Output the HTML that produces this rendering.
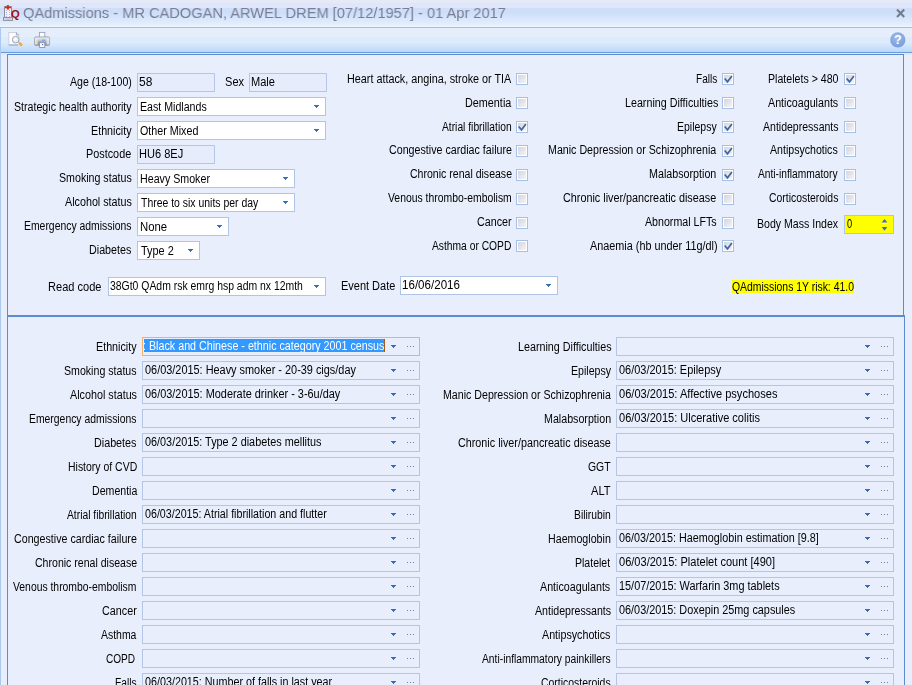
<!DOCTYPE html>
<html><head><meta charset="utf-8"><title>QAdmissions</title>
<style>
*{box-sizing:border-box;margin:0;padding:0}
html,body{width:912px;height:685px;overflow:hidden;background:#e8eefc}
body{position:relative;font-family:"Liberation Sans",sans-serif;font-size:12.5px;color:#000}
.abs{position:absolute}
#title{position:absolute;left:0;top:0;width:912px;height:28px;background:linear-gradient(#e6eaf6 0,#e6eaf6 3px,#dde6fb 3px,#dde6fb 8px,#cfdef6 8px,#cfdef6 13px,#cbe0fb 13px,#e6eefc 25px,#eaf5ff 26px,#eaf5ff 27px,#9dc0ea 27px,#9dc0ea 28px)}
#tool{position:absolute;left:0;top:28px;width:912px;height:27px;background:linear-gradient(#e6eefc 0,#e6eefc 9px,#dcecfd 9px,#dcecfd 15px,#dde9fb 15px,#b9d8fb 24px,#6a9bdc 24px,#6a9bdc 25px,#dfe9fa 25px,#dfe9fa 27px)}
#txt{position:absolute;left:0;top:0;width:912px;height:685px;will-change:transform}
#lstrip{position:absolute;left:0;top:28px;width:1px;height:657px;background:#a9c9f0}
.t{position:absolute;white-space:nowrap;height:24px;line-height:24px;transform-origin:0 50%}
.tt{font-size:15px;color:#787d93;will-change:transform}
.ro,.sel,.cmb{position:absolute;height:19px;border:1px solid #b0c4e6}
.ro{background:#e6ecfb;border-color:#b4c6e7}
.sel{background:#fff}
.sel i,.cmb i{position:absolute;top:7px;width:5px;height:3px;background:linear-gradient(#3c6cb4,#3c6cb4) 0 0/5px 1px no-repeat,linear-gradient(#3c6cb4,#3c6cb4) 1px 1px/3px 1px no-repeat,linear-gradient(#3c6cb4,#3c6cb4) 2px 2px/1px 1px no-repeat}
.sel i{right:6px}
.cb{position:absolute;width:12px;height:12px;border:1px solid #a5c0e4;background:#fff;padding:1px}
.cb:before{content:"";display:block;width:8px;height:8px;background:linear-gradient(135deg,#d3d6de,#f4f4f7)}
.cb svg{position:absolute;left:1px;top:1px}
.cmb{background:#e8eefc;border-color:#b4c6e6}
.cmb i{right:23px}
.cmb b{position:absolute;right:5px;top:8px;width:7px;height:1px;background:linear-gradient(90deg,#6482b4 0,#6482b4 1px,transparent 1px,transparent 3px,#6482b4 3px,#6482b4 4px,transparent 4px,transparent 6px,#6482b4 6px,#6482b4 7px)}
</style></head><body>
<div id="title"></div>
<div id="tool"></div>
<svg class="abs" style="left:0;top:0" width="60" height="55" viewBox="0 0 60 55">
<defs>
<linearGradient id="pb" x1="0" y1="0" x2="0" y2="1"><stop offset="0" stop-color="#ececf2"/><stop offset="0.35" stop-color="#d4d2da"/><stop offset="0.55" stop-color="#aeaab4"/><stop offset="1" stop-color="#85858f"/></linearGradient>
<radialGradient id="lens" cx="0.4" cy="0.35" r="0.7"><stop offset="0" stop-color="#ffffff"/><stop offset="1" stop-color="#dbe6f6"/></radialGradient>
</defs>
<!-- app icon -->
<rect x="4.5" y="6.6" width="7" height="11" fill="#f4f3fa" stroke="#8f8f96" stroke-width="1"/>
<rect x="3.5" y="17.6" width="9" height="2.8" fill="#e4e2f2" stroke="#8f8f96" stroke-width="1"/>
<g fill="#aaa8e6"><rect x="5.9" y="10" width="1" height="1"/><rect x="9.1" y="10" width="1" height="1"/><rect x="5.9" y="12" width="1" height="1"/><rect x="9.1" y="12" width="1" height="1"/><rect x="5.9" y="14" width="1" height="1"/><rect x="9.1" y="14" width="1" height="1"/><rect x="5.9" y="16" width="1" height="1"/><rect x="9.1" y="16" width="1" height="1"/><rect x="5.5" y="18.6" width="5" height="1" opacity=".7"/></g>
<rect x="6.9" y="5.1" width="2" height="4.5" fill="#d8281c"/><rect x="4.9" y="6.6" width="6" height="1.7" fill="#d8281c"/>
<text x="10.9" y="18.3" font-family="Liberation Sans, sans-serif" font-weight="bold" font-size="11.2" fill="#9c0e14">Q</text>
<!-- preview icon -->
<path d="M8.8 32.5 H16.4 L18.8 34.9 V45 H8.8 Z" fill="#fdfdff" stroke="#c3c9d6" stroke-width="0.8"/>
<path d="M8.8 45 H18" stroke="#8fa0bd" stroke-width="1"/>
<path d="M16.4 32.5 V34.9 H18.8" fill="none" stroke="#8f9bb5" stroke-width="0.9"/>
<circle cx="15.7" cy="39.7" r="3.3" fill="url(#lens)" stroke="#a2a4ae" stroke-width="1"/>
<path d="M18.4 43 L20.2 41.9 L22.9 44.8 L20.9 46.6 Z" fill="#f2a636"/>
<!-- printer -->
<rect x="39.4" y="32.4" width="5.4" height="5" fill="#fdfdff" stroke="#9aa2b8" stroke-width="0.9"/>
<rect x="34.6" y="36.9" width="15" height="8.6" rx="1.3" fill="url(#pb)" stroke="#9a9aa6" stroke-width="0.8"/>
<rect x="35" y="38" width="2.6" height="6.6" fill="#e9e9f0" opacity=".85"/><rect x="46.6" y="38" width="2.6" height="6.6" fill="#e9e9f0" opacity=".85"/>
<rect x="41.9" y="39.6" width="3.2" height="1.2" fill="#5faaf2"/>
<rect x="39.6" y="42.7" width="5.2" height="4.8" fill="#fdfdff" stroke="#8d93a6" stroke-width="0.9"/>
<rect x="42" y="44" width="1.2" height="1.2" fill="#4a6fe0"/>
</svg>
<svg class="abs" style="left:885px;top:0" width="27" height="55" viewBox="885 0 27 55">
<defs><radialGradient id="hg" cx="0.45" cy="0.35" r="0.75"><stop offset="0" stop-color="#9fbcea"/><stop offset="1" stop-color="#7399d8"/></radialGradient></defs>
<path d="M897 9.6 L904.2 17 M904.2 9.6 L897 17" stroke="#737b8f" stroke-width="2.1" fill="none"/>
<circle cx="897.8" cy="39.9" r="7.6" fill="url(#hg)"/>
<text x="897.8" y="44.4" text-anchor="middle" font-family="Liberation Sans, sans-serif" font-weight="bold" font-size="12.5" fill="#fff">?</text>
</svg>
<div id="lstrip"></div>

<div class="t tt" style="left:23.30px;top:1.00px;transform:scaleX(0.9752)">QAdmissions - MR CADOGAN, ARWEL DREM [07/12/1957] - 01 Apr 2017</div>
<div class="abs" style="left:7px;top:54px;width:897px;height:263px;border:1px solid #5b8bd0;border-bottom-width:2px"></div>
<div class="abs" style="left:7px;top:315px;width:898px;height:380px;border:1px solid #5b8bd0;border-top-width:2px"></div>
<div class="ro" style="left:137px;width:78px;top:73px;"></div>
<div class="ro" style="left:249px;width:78px;top:73px;"></div>
<div class="sel" style="left:137px;width:189px;top:97px;"><i></i></div>
<div class="sel" style="left:137px;width:189px;top:121px;"><i></i></div>
<div class="ro" style="left:137px;width:78px;top:145px;"></div>
<div class="sel" style="left:137px;width:158px;top:169px;"><i></i></div>
<div class="sel" style="left:137px;width:158px;top:193px;"><i></i></div>
<div class="sel" style="left:137px;width:92px;top:217px;"><i></i></div>
<div class="sel" style="left:137px;width:63px;top:241px;"><i></i></div>
<div class="sel" style="left:108px;width:218px;top:277px;"><i></i></div>
<div class="sel" style="left:400px;width:158px;top:276px;"><i></i></div>
<div class="cb" style="left:516px;top:73px"></div>
<div class="cb" style="left:516px;top:97px"></div>
<div class="cb" style="left:516px;top:121px"><svg width="10" height="10" viewBox="0 0 10 10"><path d="M0.7 3.5 L3.5 6.8 L7.9 1" stroke="#3f66a6" stroke-width="1.7" fill="none"/></svg></div>
<div class="cb" style="left:516px;top:145px"></div>
<div class="cb" style="left:516px;top:169px"></div>
<div class="cb" style="left:516px;top:193px"></div>
<div class="cb" style="left:516px;top:217px"></div>
<div class="cb" style="left:516px;top:240px"></div>
<div class="cb" style="left:722px;top:73px"><svg width="10" height="10" viewBox="0 0 10 10"><path d="M0.7 3.5 L3.5 6.8 L7.9 1" stroke="#3f66a6" stroke-width="1.7" fill="none"/></svg></div>
<div class="cb" style="left:722px;top:97px"></div>
<div class="cb" style="left:722px;top:121px"><svg width="10" height="10" viewBox="0 0 10 10"><path d="M0.7 3.5 L3.5 6.8 L7.9 1" stroke="#3f66a6" stroke-width="1.7" fill="none"/></svg></div>
<div class="cb" style="left:722px;top:145px"><svg width="10" height="10" viewBox="0 0 10 10"><path d="M0.7 3.5 L3.5 6.8 L7.9 1" stroke="#3f66a6" stroke-width="1.7" fill="none"/></svg></div>
<div class="cb" style="left:722px;top:169px"><svg width="10" height="10" viewBox="0 0 10 10"><path d="M0.7 3.5 L3.5 6.8 L7.9 1" stroke="#3f66a6" stroke-width="1.7" fill="none"/></svg></div>
<div class="cb" style="left:722px;top:193px"></div>
<div class="cb" style="left:722px;top:217px"></div>
<div class="cb" style="left:722px;top:240px"><svg width="10" height="10" viewBox="0 0 10 10"><path d="M0.7 3.5 L3.5 6.8 L7.9 1" stroke="#3f66a6" stroke-width="1.7" fill="none"/></svg></div>
<div class="cb" style="left:844px;top:73px"><svg width="10" height="10" viewBox="0 0 10 10"><path d="M0.7 3.5 L3.5 6.8 L7.9 1" stroke="#3f66a6" stroke-width="1.7" fill="none"/></svg></div>
<div class="cb" style="left:844px;top:97px"></div>
<div class="cb" style="left:844px;top:121px"></div>
<div class="cb" style="left:844px;top:145px"></div>
<div class="cb" style="left:844px;top:169px"></div>
<div class="cb" style="left:844px;top:193px"></div>
<div class="abs" style="left:844px;top:215px;width:50px;height:19px;border:1px solid #b0c4e6;background:#ffff00"><svg class="abs" style="left:36px;top:3px" width="7" height="13" viewBox="0 0 7 13"><rect x="0.8" y="3.5" width="5.4" height="0.9" fill="#fff" opacity=".75"/><path d="M0.7 3.5 L3.5 0 L6.3 3.5 Z M0.7 8 L3.5 11.8 L6.3 8 Z" fill="#3f6cb5"/></svg></div>
<div class="abs" style="left:732px;top:280px;width:122px;height:13px;background:#ffff00"></div>
<div class="cmb" style="left:142px;width:278px;top:337px;border-color:#f6b064"><i></i><b></b></div>
<div class="abs" style="left:144px;top:339px;width:241px;height:13px;background:#3399ff"></div>
<div class="abs" style="left:144px;top:339px;width:241px;height:13px;overflow:hidden;will-change:transform"><div class="t" style="left:-1.26px;top:-5.50px;transform:scaleX(0.8579);color:#fff">: Black and Chinese - ethnic category 2001 census</div></div>
<div class="abs" style="left:384px;top:339px;width:1px;height:13px;background:#a85a10"></div>
<div class="cmb" style="left:616px;width:278px;top:337px;"><i></i><b></b></div>
<div class="cmb" style="left:142px;width:278px;top:361px;"><i></i><b></b></div>
<div class="cmb" style="left:616px;width:278px;top:361px;"><i></i><b></b></div>
<div class="cmb" style="left:142px;width:278px;top:385px;"><i></i><b></b></div>
<div class="cmb" style="left:616px;width:278px;top:385px;"><i></i><b></b></div>
<div class="cmb" style="left:142px;width:278px;top:409px;"><i></i><b></b></div>
<div class="cmb" style="left:616px;width:278px;top:409px;"><i></i><b></b></div>
<div class="cmb" style="left:142px;width:278px;top:433px;"><i></i><b></b></div>
<div class="cmb" style="left:616px;width:278px;top:433px;"><i></i><b></b></div>
<div class="cmb" style="left:142px;width:278px;top:457px;"><i></i><b></b></div>
<div class="cmb" style="left:616px;width:278px;top:457px;"><i></i><b></b></div>
<div class="cmb" style="left:142px;width:278px;top:481px;"><i></i><b></b></div>
<div class="cmb" style="left:616px;width:278px;top:481px;"><i></i><b></b></div>
<div class="cmb" style="left:142px;width:278px;top:505px;"><i></i><b></b></div>
<div class="cmb" style="left:616px;width:278px;top:505px;"><i></i><b></b></div>
<div class="cmb" style="left:142px;width:278px;top:529px;"><i></i><b></b></div>
<div class="cmb" style="left:616px;width:278px;top:529px;"><i></i><b></b></div>
<div class="cmb" style="left:142px;width:278px;top:553px;"><i></i><b></b></div>
<div class="cmb" style="left:616px;width:278px;top:553px;"><i></i><b></b></div>
<div class="cmb" style="left:142px;width:278px;top:577px;"><i></i><b></b></div>
<div class="cmb" style="left:616px;width:278px;top:577px;"><i></i><b></b></div>
<div class="cmb" style="left:142px;width:278px;top:601px;"><i></i><b></b></div>
<div class="cmb" style="left:616px;width:278px;top:601px;"><i></i><b></b></div>
<div class="cmb" style="left:142px;width:278px;top:625px;"><i></i><b></b></div>
<div class="cmb" style="left:616px;width:278px;top:625px;"><i></i><b></b></div>
<div class="cmb" style="left:142px;width:278px;top:649px;"><i></i><b></b></div>
<div class="cmb" style="left:616px;width:278px;top:649px;"><i></i><b></b></div>
<div class="cmb" style="left:142px;width:278px;top:673px;"><i></i><b></b></div>
<div class="cmb" style="left:616px;width:278px;top:673px;"><i></i><b></b></div>
<div id="txt">
<div class="t" style="left:70.00px;top:70.00px;transform:scaleX(0.8472);">Age (18-100)</div>
<div class="t" style="left:139.44px;top:70.00px;transform:scaleX(0.9583);">58</div>
<div class="t" style="left:224.72px;top:70.00px;transform:scaleX(0.8850);">Sex</div>
<div class="t" style="left:250.72px;top:70.00px;transform:scaleX(0.8846);">Male</div>
<div class="t" style="left:13.65px;top:95.00px;transform:scaleX(0.8504);">Strategic health authority</div>
<div class="t" style="left:139.75px;top:95.00px;transform:scaleX(0.8494);">East Midlands</div>
<div class="t" style="left:90.64px;top:119.00px;transform:scaleX(0.8587);">Ethnicity</div>
<div class="t" style="left:139.74px;top:119.00px;transform:scaleX(0.8576);">Other Mixed</div>
<div class="t" style="left:85.88px;top:142.00px;transform:scaleX(0.8676);">Postcode</div>
<div class="t" style="left:138.52px;top:142.00px;transform:scaleX(0.8833);">HU6 8EJ</div>
<div class="t" style="left:58.75px;top:166.00px;transform:scaleX(0.8512);">Smoking status</div>
<div class="t" style="left:139.95px;top:167.00px;transform:scaleX(0.8531);">Heavy Smoker</div>
<div class="t" style="left:64.90px;top:190.00px;transform:scaleX(0.8597);">Alcohol status</div>
<div class="t" style="left:140.80px;top:191.00px;transform:scaleX(0.8357);">Three to six units per day</div>
<div class="t" style="left:23.77px;top:214.00px;transform:scaleX(0.8320);">Emergency admissions</div>
<div class="t" style="left:139.89px;top:215.00px;transform:scaleX(0.9071);">None</div>
<div class="t" style="left:89.04px;top:238.00px;transform:scaleX(0.8583);">Diabetes</div>
<div class="t" style="left:140.80px;top:239.00px;transform:scaleX(0.8730);">Type 2</div>
<div class="t" style="left:47.92px;top:274.50px;transform:scaleX(0.8847);">Read code</div>
<div class="t" style="left:110.07px;top:274.00px;transform:scaleX(0.8339);">38Gt0 QAdm rsk emrg hsp adm nx 12mth</div>
<div class="t" style="left:340.92px;top:274.00px;transform:scaleX(0.8783);">Event Date</div>
<div class="t" style="left:402.27px;top:273.00px;transform:scaleX(0.9262);">16/06/2016</div>
<div class="t" style="left:346.84px;top:67.00px;transform:scaleX(0.8640);">Heart attack, angina, stroke or TIA</div>
<div class="t" style="left:464.53px;top:90.60px;transform:scaleX(0.8654);">Dementia</div>
<div class="t" style="left:442.00px;top:114.60px;transform:scaleX(0.8214);">Atrial fibrillation</div>
<div class="t" style="left:388.75px;top:138.00px;transform:scaleX(0.8549);">Congestive cardiac failure</div>
<div class="t" style="left:409.76px;top:162.30px;transform:scaleX(0.8437);">Chronic renal disease</div>
<div class="t" style="left:387.80px;top:186.20px;transform:scaleX(0.8324);">Venous thrombo-embolism</div>
<div class="t" style="left:476.64px;top:209.80px;transform:scaleX(0.8590);">Cancer</div>
<div class="t" style="left:432.10px;top:233.70px;transform:scaleX(0.8219);">Asthma or COPD</div>
<div class="t" style="left:695.79px;top:67.00px;transform:scaleX(0.8080);">Falls</div>
<div class="t" style="left:624.64px;top:90.60px;transform:scaleX(0.8570);">Learning Difficulties</div>
<div class="t" style="left:676.86px;top:114.60px;transform:scaleX(0.8391);">Epilepsy</div>
<div class="t" style="left:548.35px;top:138.00px;transform:scaleX(0.8526);">Manic Depression or Schizophrenia</div>
<div class="t" style="left:649.44px;top:162.30px;transform:scaleX(0.8571);">Malabsorption</div>
<div class="t" style="left:563.24px;top:186.20px;transform:scaleX(0.8648);">Chronic liver/pancreatic disease</div>
<div class="t" style="left:644.80px;top:209.80px;transform:scaleX(0.8512);">Abnormal LFTs</div>
<div class="t" style="left:590.00px;top:233.70px;transform:scaleX(0.8671);">Anaemia (hb under 11g/dl)</div>
<div class="t" style="left:767.85px;top:67.00px;transform:scaleX(0.8488);">Platelets &gt; 480</div>
<div class="t" style="left:767.90px;top:90.60px;transform:scaleX(0.8561);">Anticoagulants</div>
<div class="t" style="left:763.00px;top:114.60px;transform:scaleX(0.8427);">Antidepressants</div>
<div class="t" style="left:770.20px;top:138.00px;transform:scaleX(0.8475);">Antipsychotics</div>
<div class="t" style="left:757.90px;top:162.30px;transform:scaleX(0.8175);">Anti-inflammatory</div>
<div class="t" style="left:768.87px;top:186.20px;transform:scaleX(0.8317);">Corticosteroids</div>
<div class="t" style="left:756.65px;top:212.00px;transform:scaleX(0.8463);">Body Mass Index</div>
<div class="t" style="left:847.00px;top:212.00px;transform:scaleX(0.7429);">0</div>
<div class="t" style="left:731.97px;top:275.00px;transform:scaleX(0.8331);">QAdmissions 1Y risk: 41.0</div>
<div class="t" style="left:95.64px;top:335.00px;transform:scaleX(0.8587);">Ethnicity</div>
<div class="t" style="left:63.85px;top:358.97px;transform:scaleX(0.8488);">Smoking status</div>
<div class="t" style="left:69.70px;top:382.94px;transform:scaleX(0.8610);">Alcohol status</div>
<div class="t" style="left:28.77px;top:406.91px;transform:scaleX(0.8313);">Emergency admissions</div>
<div class="t" style="left:93.84px;top:430.88px;transform:scaleX(0.8604);">Diabetes</div>
<div class="t" style="left:67.76px;top:454.85px;transform:scaleX(0.8370);">History of CVD</div>
<div class="t" style="left:91.65px;top:478.82px;transform:scaleX(0.8481);">Dementia</div>
<div class="t" style="left:66.90px;top:502.79px;transform:scaleX(0.8226);">Atrial fibrillation</div>
<div class="t" style="left:13.85px;top:526.76px;transform:scaleX(0.8542);">Congestive cardiac failure</div>
<div class="t" style="left:34.66px;top:550.73px;transform:scaleX(0.8445);">Chronic renal disease</div>
<div class="t" style="left:13.20px;top:574.70px;transform:scaleX(0.8297);">Venous thrombo-embolism</div>
<div class="t" style="left:101.54px;top:598.67px;transform:scaleX(0.8615);">Cancer</div>
<div class="t" style="left:100.90px;top:622.64px;transform:scaleX(0.8357);">Asthma</div>
<div class="t" style="left:105.99px;top:646.61px;transform:scaleX(0.8057);">COPD</div>
<div class="t" style="left:114.78px;top:670.58px;transform:scaleX(0.8160);">Falls</div>
<div class="t" style="left:145.00px;top:358.00px;transform:scaleX(0.8723);">06/03/2015: Heavy smoker - 20-39 cigs/day</div>
<div class="t" style="left:145.00px;top:382.00px;transform:scaleX(0.8728);">06/03/2015: Moderate drinker - 3-6u/day</div>
<div class="t" style="left:145.00px;top:430.00px;transform:scaleX(0.8675);">06/03/2015: Type 2 diabetes mellitus</div>
<div class="t" style="left:145.00px;top:502.00px;transform:scaleX(0.8549);">06/03/2015: Atrial fibrillation and flutter</div>
<div class="t" style="left:145.00px;top:670.00px;transform:scaleX(0.8604);">06/03/2015: Number of falls in last year</div>
<div class="t" style="left:517.54px;top:335.00px;transform:scaleX(0.8589);">Learning Difficulties</div>
<div class="t" style="left:570.55px;top:358.97px;transform:scaleX(0.8457);">Epilepsy</div>
<div class="t" style="left:442.75px;top:382.94px;transform:scaleX(0.8505);">Manic Depression or Schizophrenia</div>
<div class="t" style="left:543.65px;top:406.91px;transform:scaleX(0.8545);">Malabsorption</div>
<div class="t" style="left:457.64px;top:430.88px;transform:scaleX(0.8625);">Chronic liver/pancreatic disease</div>
<div class="t" style="left:587.77px;top:454.85px;transform:scaleX(0.8346);">GGT</div>
<div class="t" style="left:590.70px;top:478.82px;transform:scaleX(0.8909);">ALT</div>
<div class="t" style="left:573.87px;top:502.79px;transform:scaleX(0.8279);">Bilirubin</div>
<div class="t" style="left:548.05px;top:526.76px;transform:scaleX(0.8528);">Haemoglobin</div>
<div class="t" style="left:574.96px;top:550.73px;transform:scaleX(0.8415);">Platelet</div>
<div class="t" style="left:540.10px;top:574.70px;transform:scaleX(0.8561);">Anticoagulants</div>
<div class="t" style="left:534.80px;top:598.67px;transform:scaleX(0.8483);">Antidepressants</div>
<div class="t" style="left:541.80px;top:622.64px;transform:scaleX(0.8562);">Antipsychotics</div>
<div class="t" style="left:482.00px;top:646.61px;transform:scaleX(0.8224);">Anti-inflammatory painkillers</div>
<div class="t" style="left:540.96px;top:670.58px;transform:scaleX(0.8354);">Corticosteroids</div>
<div class="t" style="left:618.80px;top:358.00px;transform:scaleX(0.8752);">06/03/2015: Epilepsy</div>
<div class="t" style="left:618.80px;top:382.00px;transform:scaleX(0.8849);">06/03/2015: Affective psychoses</div>
<div class="t" style="left:618.80px;top:406.00px;transform:scaleX(0.8818);">06/03/2015: Ulcerative colitis</div>
<div class="t" style="left:618.80px;top:526.00px;transform:scaleX(0.8636);">06/03/2015: Haemoglobin estimation [9.8]</div>
<div class="t" style="left:618.80px;top:550.00px;transform:scaleX(0.8841);">06/03/2015: Platelet count [490]</div>
<div class="t" style="left:618.73px;top:574.00px;transform:scaleX(0.8710);">15/07/2015: Warfarin 3mg tablets</div>
<div class="t" style="left:618.80px;top:598.00px;transform:scaleX(0.8685);">06/03/2015: Doxepin 25mg capsules</div>
</div>
</body></html>
